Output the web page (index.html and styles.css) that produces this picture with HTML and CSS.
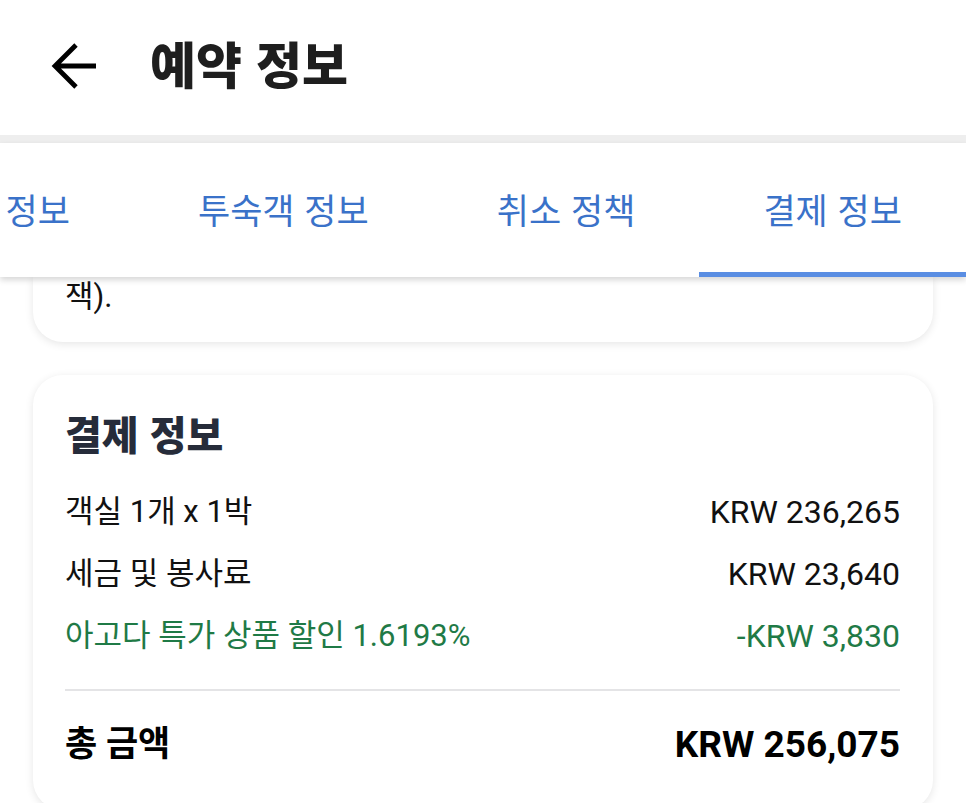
FILE: index.html
```html
<!DOCTYPE html>
<html lang="ko">
<head>
<meta charset="utf-8">
<title>예약 정보</title>
<link rel="stylesheet" href="styles.css">
</head>
<body>
<div class="app">
  <header class="appbar">
    <svg class="back" width="52" height="48" viewBox="0 0 52 48" aria-hidden="true">
      <path d="M48 24 H7 M28 3 L7 24 L28 45" fill="none" stroke="#000" stroke-width="4.8" stroke-linejoin="miter"/>
    </svg>
    <h1 class="title">예약 정보</h1>
  </header>
  <div class="band"></div>
  <nav class="tabs">
    <div class="tab first">정보</div>
    <div class="tab">투숙객 정보</div>
    <div class="tab">취소 정책</div>
    <div class="tab active">결제 정보</div>
  </nav>
  <main class="content">
    <section class="card card-partial">
      <p class="tail">잭).</p>
    </section>
    <section class="card card-pay">
      <h2 class="card-title">결제 정보</h2>
      <div class="rows">
        <div class="row"><span>객실 1개 x 1박</span><span class="amt">KRW 236,265</span></div>
        <div class="row"><span>세금 및 봉사료</span><span class="amt">KRW 23,640</span></div>
        <div class="row discount"><span>아고다 특가 상품 할인 1.6193%</span><span class="amt">-KRW 3,830</span></div>
      </div>
      <div class="divider"></div>
      <div class="row total"><span>총 금액</span><span class="amt">KRW 256,075</span></div>
    </section>
  </main>
</div>
</body>
</html>
```

FILE: styles.css
```css
* { box-sizing: border-box; }
html, body { margin: 0; padding: 0; }
body {
  background: #ffffff;
  font-family: Roboto, "Noto Sans CJK KR", sans-serif;
  color: #111111;
  width: 966px;
  overflow: hidden;
}
.app { width: 966px; }

.appbar {
  height: 135px;
  display: flex;
  align-items: center;
  padding-left: 48px;
  padding-bottom: 12px;
  background: #ffffff;
}
.back { flex: none; margin-top: 8px; }
.title {
  margin: 0 0 0 50px;
  font-family: "Noto Sans CJK KR", sans-serif;
  font-weight: 900;
  font-size: 50px;
  line-height: 60px;
  color: #1e1e1e;
}

.band { height: 8px; background: #eeeeee; }

.tabs {
  height: 134px;
  display: flex;
  justify-content: flex-end;
  overflow: hidden;
  background: #ffffff;
  position: relative;
  z-index: 2;
  box-shadow: 0 3px 6px rgba(0, 0, 0, 0.16);
}
.tab {
  flex: none;
  padding: 0 64px;
  font-family: "Noto Sans CJK KR", sans-serif;
  font-size: 35px;
  line-height: 132px;
  color: #3a72c9;
  white-space: nowrap;
}
.tab.first { padding-left: 4px; }
.tab.active { box-shadow: inset 0 -5px 0 #5a8ee3; }

.content {
  padding: 0 33px;
  display: flex;
  flex-direction: column;
  gap: 33px;
}
.card {
  background: #ffffff;
  border-radius: 30px;
  box-shadow: 0 2px 8px rgba(0, 0, 0, 0.10);
}
.card-partial {
  height: 65px;
  border-radius: 0 0 30px 30px;
  padding: 0 32px;
}
.tail {
  margin: 0;
  font-size: 31px;
  line-height: 40px;
  color: #111111;
}

.card-pay { padding: 28px 33px 40px 32px; }
.card-title {
  margin: 0;
  font-family: "Noto Sans CJK KR", sans-serif;
  font-weight: 900;
  font-size: 40px;
  line-height: 60px;
  color: #262c3a;
}
.rows {
  margin-top: 27px;
  display: flex;
  flex-direction: column;
  gap: 18px;
}
.row {
  display: flex;
  justify-content: space-between;
  align-items: center;
  font-size: 31px;
  line-height: 44px;
  color: #111111;
}
.row .amt { font-size: 32px; }
.row.discount { color: #1f7a46; }
.divider {
  margin-top: 31px;
  height: 2px;
  background: #e4e4e6;
}
.row.total {
  margin-top: 29px;
  font-weight: 700;
  font-size: 35px;
  line-height: 50px;
  color: #000000;
}
.row.total .amt { font-size: 37px; }
```
